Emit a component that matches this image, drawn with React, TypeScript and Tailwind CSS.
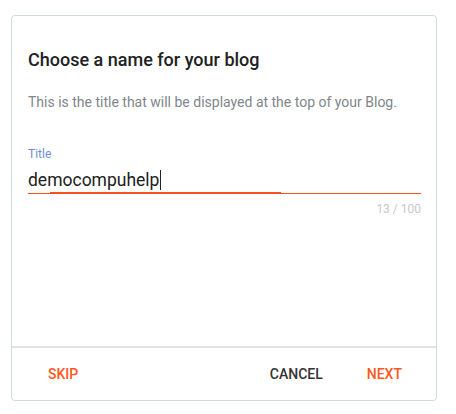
export default function App() {
  return (
    <div className="w-[456px] h-[414px] bg-white pt-[15px] pl-[11px]" style={{ fontFamily: "Roboto, 'Liberation Sans', sans-serif" }}>
      <div className="w-[426px] h-[386px] border border-[#d3dae0] rounded-[4px] flex flex-col">
        <div className="flex-1 pl-[16px] pr-[15px] pt-[32px]">
          <h1 className="text-[18px] leading-[24px] font-medium text-[#212121]">Choose a name for your blog</h1>
          <p className="mt-[20px] text-[14px] leading-[20px] text-[#80868b]">This is the title that will be displayed at the top of your Blog.</p>
          <div className="mt-[34px]">
            <div className="text-[12px] leading-[16px] text-[#6f8fd8]">Title</div>
            <div className="mt-[6px] text-[17.5px] leading-[24px] text-[#212121] flex items-center">
              <span>democompuhelp</span>
              <span className="inline-block ml-[1px] w-[1px] h-[20px] bg-[#212121]"></span>
            </div>
            <div className="relative h-[1px] bg-[#f4511e] mt-[1px]">
              <div className="absolute left-[22px] top-[-1px] w-[231px] h-[2px] bg-[#f4511e]"></div>
            </div>
            <div className="mt-[7px] text-right text-[12px] leading-[16px] text-[#c8c8c8]">13 / 100</div>
          </div>
        </div>
        <div className="h-[2px] bg-[#dfe1e3]"></div>
        <div className="h-[52px] flex items-center text-[14px] font-medium">
          <span className="ml-[36px] text-[#ff5722]">SKIP</span>
          <span className="ml-auto text-[#333333]">CANCEL</span>
          <span className="ml-[44px] mr-[34px] text-[#ff5722]">NEXT</span>
        </div>
      </div>
    </div>
  );
}
